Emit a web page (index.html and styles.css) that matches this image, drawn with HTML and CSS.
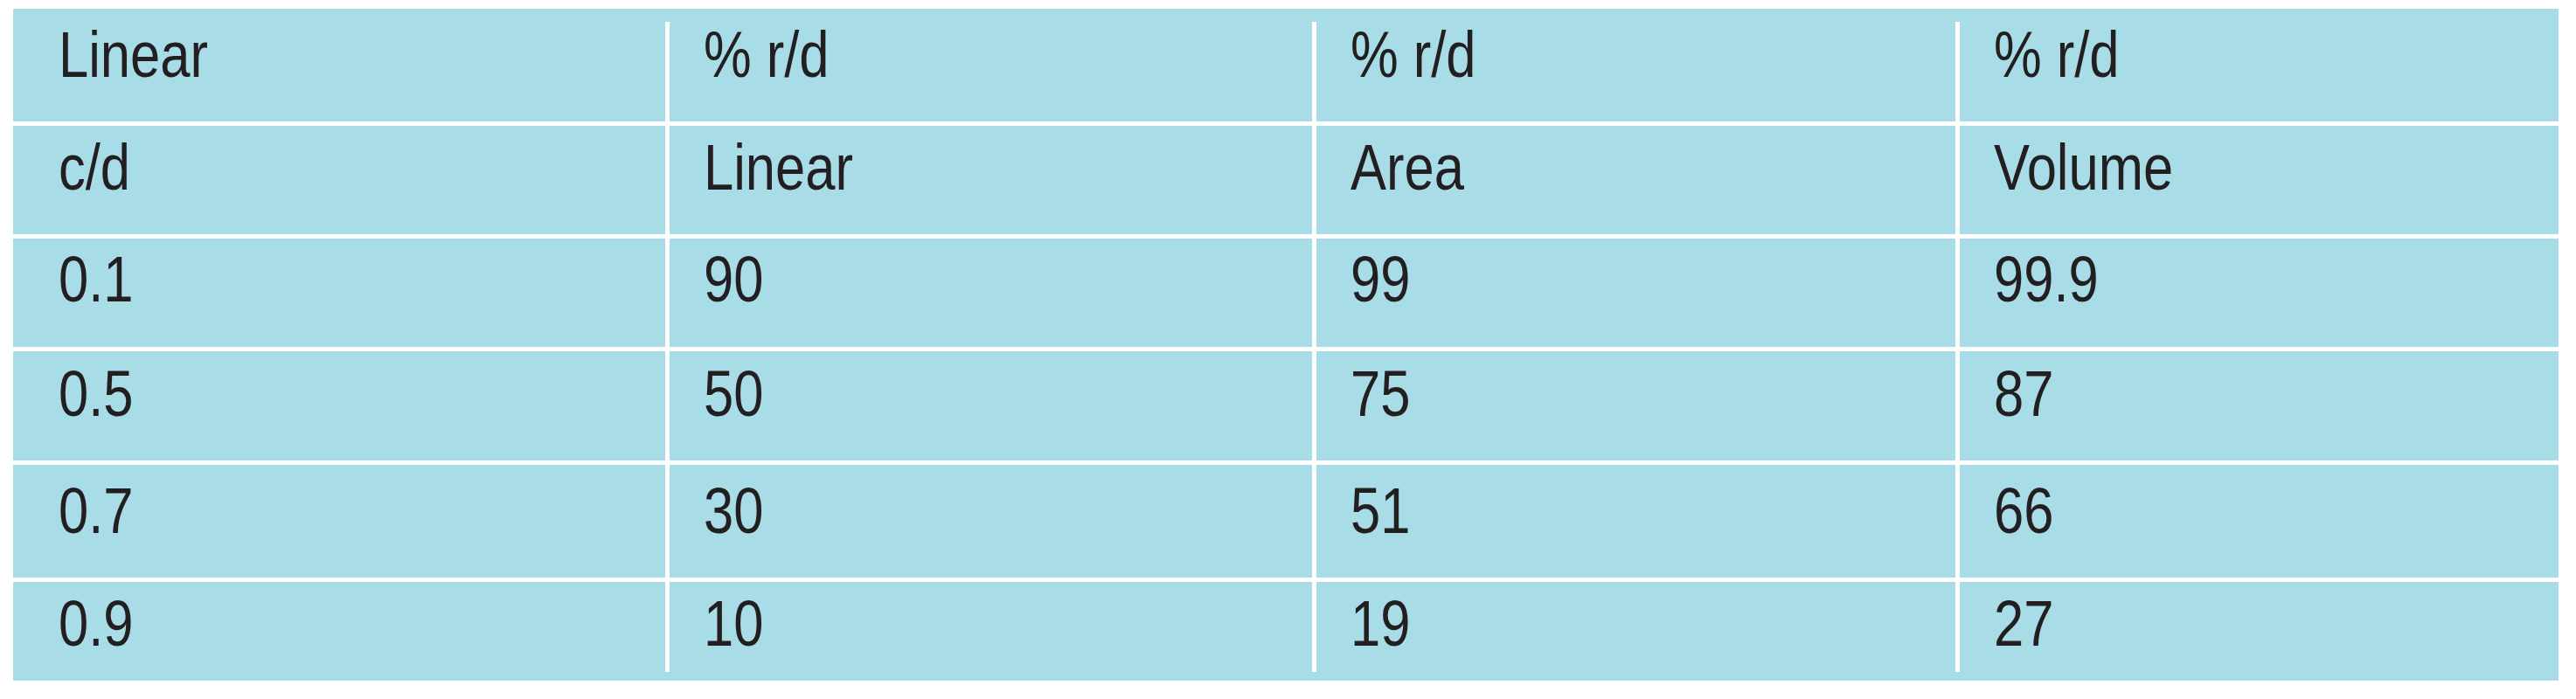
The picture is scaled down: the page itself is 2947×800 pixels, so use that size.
FILE: index.html
```html
<!DOCTYPE html>
<html lang="en">
<head>
<meta charset="utf-8">
<title>Ratio table</title>
<link rel="stylesheet" href="styles.css">
</head>
<body>
<div class="table">
  <div class="row">
    <div class="cell"><span class="txt">Linear</span></div>
    <div class="cell"><span class="txt">% r/d</span></div>
    <div class="cell"><span class="txt">% r/d</span></div>
    <div class="cell"><span class="txt">% r/d</span></div>
  </div>
  <div class="row">
    <div class="cell"><span class="txt">c/d</span></div>
    <div class="cell"><span class="txt">Linear</span></div>
    <div class="cell"><span class="txt">Area</span></div>
    <div class="cell"><span class="txt">Volume</span></div>
  </div>
  <div class="row">
    <div class="cell"><span class="txt">0.1</span></div>
    <div class="cell"><span class="txt">90</span></div>
    <div class="cell"><span class="txt">99</span></div>
    <div class="cell"><span class="txt">99.9</span></div>
  </div>
  <div class="row">
    <div class="cell"><span class="txt">0.5</span></div>
    <div class="cell"><span class="txt">50</span></div>
    <div class="cell"><span class="txt">75</span></div>
    <div class="cell"><span class="txt">87</span></div>
  </div>
  <div class="row">
    <div class="cell"><span class="txt">0.7</span></div>
    <div class="cell"><span class="txt">30</span></div>
    <div class="cell"><span class="txt">51</span></div>
    <div class="cell"><span class="txt">66</span></div>
  </div>
  <div class="row">
    <div class="cell"><span class="txt">0.9</span></div>
    <div class="cell"><span class="txt">10</span></div>
    <div class="cell"><span class="txt">19</span></div>
    <div class="cell"><span class="txt">27</span></div>
  </div>
</div>
</body>
</html>
```

FILE: styles.css
```css
html, body {
  margin: 0;
  padding: 0;
  background: #ffffff;
}

.table {
  margin: 10px 0 0 15px;
  width: 2912px;
  background: #a8dde8;
  font-family: "Liberation Sans Narrow", "Liberation Sans", Arial, sans-serif;
  font-size: 75px;
  line-height: 1;
  color: #231f20;
}

.row {
  display: grid;
  grid-template-columns: 746px 740px 736px 690px;
  border-bottom: 5px solid #ffffff;
  box-sizing: border-box;
}

.row:last-child {
  border-bottom: none;
  padding-bottom: 10px;
}

.cell {
  box-sizing: border-box;
  padding-left: 39px;
  padding-top: 10px;
  white-space: nowrap;
}

.cell:first-child {
  padding-left: 52px;
}

.cell + .cell {
  border-left: 5px solid #ffffff;
}

.txt {
  display: inline-block;
  transform: scaleX(0.82);
  transform-origin: 0 0;
}

/* row heights (cell area, excluding separators) */
.row:nth-child(1) { padding-top: 15px; }
.row:nth-child(1) .cell { height: 114px; padding-top: 0; }
.row:nth-child(2) .cell { height: 124px; padding-top: 10px; }
.row:nth-child(3) .cell { height: 124px; padding-top: 9px; }
.row:nth-child(4) .cell { height: 125px; padding-top: 11px; }
.row:nth-child(5) .cell { height: 129px; padding-top: 15px; }
.row:nth-child(6) .cell { height: 103px; padding-top: 10px; }
```
